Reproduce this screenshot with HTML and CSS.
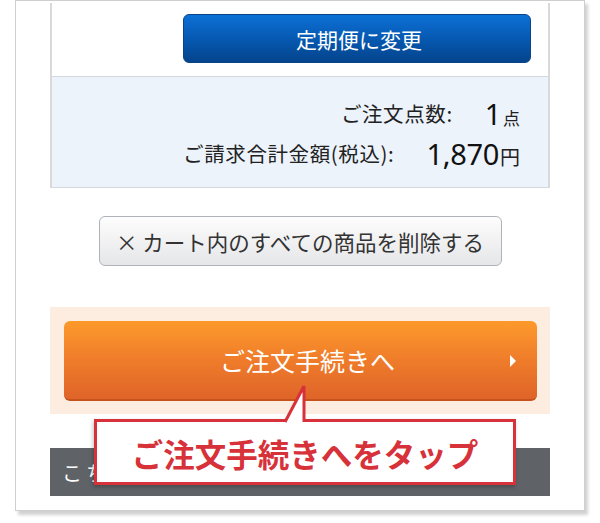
FILE: index.html
```html
<!DOCTYPE html>
<html lang="ja">
<head>
<meta charset="utf-8">
<link rel="stylesheet" href="styles.css">
</head>
<body>
<div class="frame">
  <div class="cart">
    <div class="regular-row">
      <a class="btn-blue">定期便に変更</a>
    </div>
    <div class="summary">
      <div class="sum-row">
        <span class="sum-label">ご注文点数:</span>
        <span class="sum-value"><span class="num">1</span><span class="unit-s">点</span></span>
      </div>
      <div class="sum-row">
        <span class="sum-label">ご請求合計金額(税込):</span>
        <span class="sum-value"><span class="num">1,870</span><span class="unit-l">円</span></span>
      </div>
    </div>
  </div>
  <div class="delete-row">
    <a class="btn-delete">×&nbsp;カート内のすべての商品を削除する</a>
  </div>
  <div class="order-panel">
    <a class="btn-order"><span class="order-text">ご注文手続きへ</span><span class="arrow"></span></a>
  </div>
  <div class="dark-bar">こちらの商品もおすすめです</div>

  <div class="callout">ご注文手続きへをタップ</div>
  <svg class="callout-tail" width="26" height="42" viewBox="0 0 26 42">
    <polygon points="3,40 22,2 22,40" fill="#fff"/>
    <polyline points="3,39 22,3 22,39" fill="none" stroke="#d7313a" stroke-width="3" stroke-linejoin="miter"/>
  </svg>
</div>
</body>
</html>
```
FILE: styles.css
```css
html, body {
  margin: 0;
  padding: 0;
  background: #fff;
}
body {
  width: 600px;
  height: 523px;
  overflow: hidden;
  font-family: "Noto Sans CJK JP", "Noto Sans", sans-serif;
  color: #222;
}
.frame {
  position: relative;
  box-sizing: border-box;
  margin-left: 15px;
  width: 570px;
  height: 511px;
  border: 1px solid #cfcfcf;
  background: #fff;
  box-shadow: 3px 4px 3px rgba(0, 0, 0, 0.18);
  padding: 2px 34px 0 34px;
}
.cart {
  border-left: 2px solid #d9d9d9;
  border-right: 2px solid #d9d9d9;
}
.regular-row {
  display: flex;
  justify-content: flex-end;
  padding: 11px 17px 0 0;
  margin-bottom: 13px;
}
.btn-blue {
  box-sizing: border-box;
  width: 348px;
  height: 49px;
  border-radius: 6px;
  border: 1px solid #0a4488;
  background: linear-gradient(#0c70d6, #0657ae 55%, #04448c);
  color: #fff;
  font-size: 21px;
  display: flex;
  align-items: center;
  justify-content: center;
  padding-left: 4px;
}
.summary {
  background: #edf3fb;
  border-top: 1px solid #d2d8df;
  border-bottom: 1px solid #d2d8df;
  padding: 16px 28px 14px 0;
  display: flex;
  flex-direction: column;
  align-items: flex-end;
}
.sum-row {
  height: 40px;
  display: flex;
  align-items: center;
}
.sum-label {
  font-size: 20.5px;
  letter-spacing: 0.6px;
  margin-right: 32px;
  color: #222;
}
.sum-value {
  display: flex;
  align-items: baseline;
}
.num {
  font-family: "Noto Sans", "Liberation Sans", sans-serif;
  font-size: 29px;
  color: #111;
  letter-spacing: -0.3px;
}
.unit-s {
  font-size: 17px;
  margin-left: 2px;
}
.unit-l {
  font-size: 20px;
  margin-left: 1px;
}
.delete-row {
  display: flex;
  justify-content: center;
  margin-top: 28px;
}
.btn-delete {
  box-sizing: border-box;
  width: 403px;
  height: 50px;
  border: 1px solid #afb3b9;
  border-radius: 6px;
  background: linear-gradient(#fdfdfd, #e5e6e8);
  color: #333;
  font-size: 21.5px;
  display: flex;
  align-items: center;
  justify-content: center;
}
.order-panel {
  margin-top: 41px;
  background: #fdece0;
  height: 107px;
  box-sizing: border-box;
  padding: 14px 13px 12px 14px;
}
.btn-order {
  position: relative;
  box-sizing: border-box;
  height: 80px;
  border-radius: 6px;
  background: linear-gradient(#fd9a2b, #ef7c2a 50%, #df6429);
  border-bottom: 2px solid #c6531c;
  display: flex;
  align-items: center;
  justify-content: center;
  color: #fff;
  font-size: 25px;
}
.order-text {
  padding-left: 14px;
}
.arrow {
  position: absolute;
  right: 21px;
  top: 34px;
  width: 0;
  height: 0;
  border-top: 6px solid transparent;
  border-bottom: 6px solid transparent;
  border-left: 6px solid #fff;
}
.dark-bar {
  margin-top: 34px;
  height: 48px;
  background: #5f6266;
  color: #fff;
  font-size: 20px;
  letter-spacing: 4px;
  display: flex;
  align-items: center;
  padding-left: 12px;
  white-space: nowrap;
  overflow: hidden;
}
.callout {
  position: absolute;
  left: 78px;
  top: 418px;
  box-sizing: border-box;
  width: 422px;
  height: 66px;
  border: 3px solid #d7313a;
  background: #fff;
  box-shadow: -1px 2px 4px rgba(0, 0, 0, 0.25);
  color: #d7313a;
  font-weight: bold;
  font-size: 31.5px;
  display: flex;
  align-items: center;
  justify-content: center;
  padding-top: 1px;
}
.callout-tail {
  position: absolute;
  left: 266px;
  top: 382px;
}
```
